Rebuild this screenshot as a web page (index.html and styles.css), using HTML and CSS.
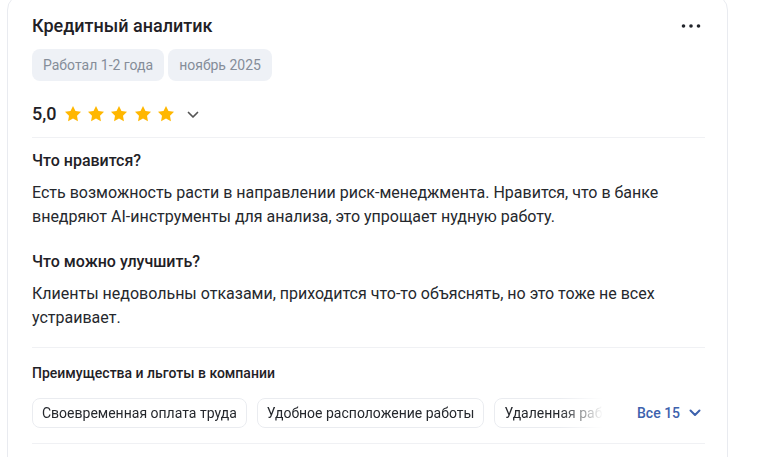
FILE: index.html
```html
<!DOCTYPE html>
<html lang="ru">
<head>
<meta charset="utf-8">
<title>Отзыв</title>
<link rel="stylesheet" href="styles.css">
</head>
<body>
<article class="card">
  <header class="head">
    <h2 class="title">Кредитный аналитик</h2>
    <button class="more" aria-label="Ещё">
      <svg width="20" height="6" viewBox="0 0 20 6"><circle cx="2.5" cy="3" r="1.8"/><circle cx="10" cy="3" r="1.8"/><circle cx="17.5" cy="3" r="1.8"/></svg>
    </button>
  </header>
  <div class="tags">
    <span class="tag">Работал 1-2 года</span>
    <span class="tag">ноябрь 2025</span>
  </div>
  <div class="rating">
    <span class="score">5,0</span>
    <span class="stars">
      <svg class="star" viewBox="2 2 20 19.1"><path d="M12 2l3.09 6.26L22 9.27l-5 4.87 1.18 6.88L12 17.770l-6.18 3.25L7 14.14 2 9.27l6.91-1.01L12 2z"/></svg>
      <svg class="star" viewBox="2 2 20 19.1"><path d="M12 2l3.09 6.26L22 9.27l-5 4.87 1.18 6.88L12 17.77l-6.18 3.25L7 14.14 2 9.27l6.91-1.01L12 2z"/></svg>
      <svg class="star" viewBox="2 2 20 19.1"><path d="M12 2l3.09 6.26L22 9.27l-5 4.87 1.18 6.88L12 17.77l-6.18 3.25L7 14.14 2 9.27l6.91-1.01L12 2z"/></svg>
      <svg class="star" viewBox="2 2 20 19.1"><path d="M12 2l3.09 6.26L22 9.27l-5 4.87 1.18 6.88L12 17.77l-6.18 3.25L7 14.14 2 9.27l6.91-1.01L12 2z"/></svg>
      <svg class="star" viewBox="2 2 20 19.1"><path d="M12 2l3.09 6.26L22 9.27l-5 4.87 1.18 6.88L12 17.77l-6.18 3.25L7 14.14 2 9.27l6.91-1.01L12 2z"/></svg>
    </span>
    <svg class="chev" width="12" height="8" viewBox="0 0 12 8"><path d="M1.5 1.5L6 6l4.5-4.5" fill="none" stroke="#555" stroke-width="1.7" stroke-linecap="round" stroke-linejoin="round"/></svg>
  </div>
  <div class="body">
    <section class="block">
      <h3 class="q">Что нравится?</h3>
      <p class="a">Есть возможность расти в направлении риск-менеджмента. Нравится, что в банке внедряют AI-инструменты для анализа, это упрощает нудную работу.</p>
    </section>
    <section class="block">
      <h3 class="q">Что можно улучшить?</h3>
      <p class="a">Клиенты недовольны отказами, приходится что-то объяснять, но это тоже не всех устраивает.</p>
    </section>
  </div>
  <section class="perks">
    <h4 class="perks-title">Преимущества и льготы в компании</h4>
    <div class="perks-row">
      <div class="chips">
        <span class="chip">Своевременная оплата труда</span>
        <span class="chip">Удобное расположение работы</span>
        <span class="chip">Удаленная работа</span>
        <span class="chip">ДМС</span>
      </div>
      <button class="all">Все 15
        <svg width="12" height="8" viewBox="0 0 12 8"><path d="M1.5 1.5L6 6l4.5-4.5" fill="none" stroke="currentColor" stroke-width="2" stroke-linecap="round" stroke-linejoin="round"/></svg>
      </button>
    </div>
  </section>
</article>
</body>
</html>
```
FILE: styles.css
```css
* { box-sizing: border-box; }
html, body { margin: 0; background: #fff; }
body {
  font-family: Roboto, "Noto Sans", Arial, sans-serif;
  color: #1f2126;
  overflow: hidden;
}
.card {
  width: 721px;
  margin: -6px 0 0 7px;
  border: 1px solid #e9ebf0;
  border-radius: 16px;
  background: #fff;
  padding: 19px 22px 60px 24px;
}
.head {
  display: flex;
  justify-content: space-between;
  align-items: center;
}
.title {
  margin: 0;
  font-size: 18px;
  line-height: 24px;
  font-weight: 500;
}
.more {
  border: 0;
  background: none;
  padding: 0;
  margin-right: 4px;
  display: flex;
  fill: #22252b;
}
.tags {
  display: flex;
  gap: 4px;
  margin-top: 11px;
}
.tag {
  height: 32px;
  line-height: 32px;
  padding: 0 11px;
  border-radius: 8px;
  background: #eef1f6;
  color: #858d99;
  font-size: 14px;
}
.rating {
  display: flex;
  align-items: center;
  height: 24px;
  margin-top: 21px;
}
.score {
  font-size: 18px;
  line-height: 24px;
  font-weight: 500;
}
.stars {
  display: flex;
  gap: 7.4px;
  margin-left: 8px;
}
.star {
  width: 16px;
  height: 15.3px;
  fill: #ffb700;
}
.chev { margin-left: 13px; margin-top: 1px; }
.body {
  border-top: 1px solid #f0f1f4;
  margin-top: 11px;
  padding-top: 11px;
  padding-bottom: 17px;
  border-bottom: 1px solid #f0f1f4;
}
.block + .block { margin-top: 21px; }
.q {
  margin: 0;
  font-size: 16px;
  line-height: 24px;
  font-weight: 500;
}
.a {
  margin: 8px 0 0;
  font-size: 16px;
  line-height: 24px;
  color: #25282d;
}
.perks {
  padding: 15px 0 15px;
  border-bottom: 1px solid #f0f1f4;
}
.perks-title {
  margin: 0;
  font-size: 14px;
  line-height: 20px;
  font-weight: 500;
}
.perks-row {
  display: flex;
  align-items: center;
  margin-top: 15px;
}
.chips {
  flex: 0 0 573px;
  display: flex;
  gap: 10px;
  overflow: hidden;
  -webkit-mask-image: linear-gradient(to right, #000 calc(100% - 45px), transparent calc(100% - 2px));
  mask-image: linear-gradient(to right, #000 calc(100% - 45px), transparent calc(100% - 2px));
}
.chip {
  flex: none;
  height: 30px;
  line-height: 28px;
  padding: 0 9px;
  border: 1px solid #eaecf0;
  border-radius: 8px;
  font-size: 14px;
  color: #25282d;
  white-space: nowrap;
}
.all {
  margin-left: 32px;
  border: 0;
  background: none;
  padding: 0;
  display: flex;
  align-items: center;
  gap: 9px;
  font-family: inherit;
  font-size: 14px;
  font-weight: 500;
  color: #3d62ad;
}
```
